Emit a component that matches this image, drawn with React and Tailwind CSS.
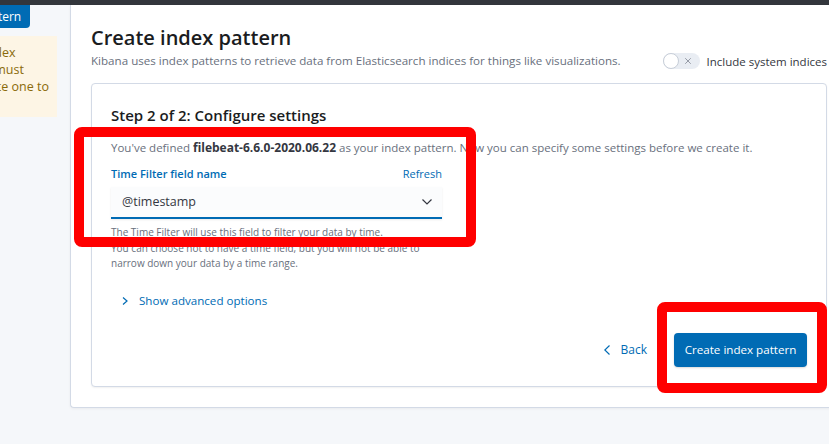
import { X } from 'lucide-react';

// Kibana "Create index pattern" step 2 screen with red annotation boxes.
function Chevron({ dir, className }) {
  if (dir === 'down') {
    return (
      <svg width="10" height="6" viewBox="0 0 10 6" className={className} fill="none">
        <polyline points="0.5,0.5 5,5 9.5,0.5" stroke="#343741" strokeWidth="1.2" />
      </svg>
    );
  }
  const pts = dir === 'left' ? '5.5,0.5 0.8,5 5.5,9.5' : '0.5,0.5 4.5,4 0.5,7.5';
  return (
    <svg width="6" height={dir === 'left' ? 10 : 8} viewBox={dir === 'left' ? '0 0 6 10' : '0 0 5 8'} className={className} fill="none">
      <polyline points={pts} stroke="#006bb4" strokeWidth="1.2" />
    </svg>
  );
}

function Sidebar() {
  return (
    <div className="w-[70px] shrink-0 overflow-hidden">
      <div className="ml-[-103px] flex h-[23px] w-[133px] items-center justify-center rounded-b-[4px] bg-[#006bb4] text-[12px] text-white">
        Create index pattern
      </div>
      <div className="mt-[8px] ml-[-96px] w-[153px] bg-[#fdf5e5] pt-[8px] pb-[5px] pl-[15px] text-[12.5px] leading-[17px] text-[#8a6a0a] whitespace-nowrap">
        No default index
        <br />
        pattern. You must
        <br />
        select or create one to
        <br />
        continue.
      </div>
    </div>
  );
}

function Toggle() {
  return (
    <div className="flex items-center">
      <div className="relative flex h-[16px] w-[37px] items-center rounded-full bg-[#e9edf3]">
        <div className="h-[16px] w-[16px] rounded-full border border-[#c7ced8] bg-white" />
        <X className="ml-[4px] h-[10px] w-[10px] text-[#69707d]" strokeWidth={1.6} />
      </div>
      <span className="ml-[7px] text-[11.5px] text-[#343741]">Include system indices</span>
    </div>
  );
}

function SettingsCard() {
  return (
    <div className="mt-[13px] rounded-[4px] border border-[#d3dae6] bg-white px-[19px] pt-[19px] pb-[19px] shadow-[0_1px_2px_rgba(0,0,0,0.06)]">
      <h2 className="text-[15px] font-semibold leading-[24px] text-[#1a1c21]">
        Step 2 of 2: Configure settings
      </h2>
      <p className="mt-[12px] text-[11.5px] leading-[18px] text-[#69707d]">
        You've defined <span className="text-[12px] font-bold text-[#343741]">filebeat-6.6.0-2020.06.22</span> as your
        index pattern. Now you can specify some settings before we create it.
      </p>
      <div className="mt-[9px] w-[331px]">
        <div className="flex items-center justify-between text-[11px] leading-[16px]">
          <span className="font-semibold text-[#006bb4]">Time Filter field name</span>
          <span className="text-[#006bb4]">Refresh</span>
        </div>
        <div className="mt-[5px] flex h-[32px] items-center justify-between border-b-2 border-[#006bb4] bg-[#fbfcfd] pl-[11px] pr-[10px] shadow-[0_1px_2px_rgba(0,0,0,0.08)]">
          <span className="text-[12.5px] text-[#343741]">@timestamp</span>
          <Chevron dir="down" />
        </div>
        <div className="mt-[6px] text-[10px] leading-[15.5px] text-[#69707d]">
          <p>The Time Filter will use this field to filter your data by time.</p>
          <p>You can choose not to have a time field, but you will not be able to</p>
          <p>narrow down your data by a time range.</p>
        </div>
      </div>
      <div className="mt-[20px] flex items-center pl-[11px] text-[11.6px] leading-[18px] text-[#006bb4]">
        <Chevron dir="right" />
        <span className="ml-[11px]">Show advanced options</span>
      </div>
      <div className="mt-[23px] flex items-center justify-end">
        <div className="flex items-center text-[12px] text-[#006bb4]">
          <Chevron dir="left" />
          <span className="ml-[11px]">Back</span>
        </div>
        <div className="ml-[27px] flex h-[34px] w-[133px] items-center justify-center rounded-[4px] bg-[#006bb4] text-[11.6px] text-white shadow-[0_1px_2px_rgba(0,0,0,0.15)]">
          Create index pattern
        </div>
      </div>
    </div>
  );
}

export default function App() {
  return (
    <div
      className="relative h-[444px] w-[829px] overflow-hidden bg-[#f5f7fa]"
      style={{ fontFamily: '"Open Sans", "Noto Sans", sans-serif' }}
    >
      <div className="h-[5px] bg-[#33363c]" />
      <div className="flex">
        <Sidebar />
        <div className="w-[800px] shrink-0 rounded-bl-[4px] border-b border-l border-[#d3dae6] bg-white pt-[21px] pl-[20px] pb-[20px] shadow-[0_1px_3px_rgba(0,0,0,0.05)]">
          <div className="w-[736px]">
            <div className="flex items-end justify-between">
              <div>
                <h1 className="text-[20px] font-semibold leading-[24px] text-[#1a1c21]">Create index pattern</h1>
                <p className="mt-[2px] text-[11.6px] leading-[18px] text-[#69707d]">
                  Kibana uses index patterns to retrieve data from Elasticsearch indices for things like visualizations.
                </p>
              </div>
              <Toggle />
            </div>
            <SettingsCard />
          </div>
        </div>
      </div>

      {/* red annotation boxes drawn over the screenshot */}
      <div className="absolute left-[74px] top-[127px] h-[120px] w-[402px] rounded-[8px] border-[10px] border-[#ff0000]" />
      <div className="absolute left-[657px] top-[302px] h-[91px] w-[170px] rounded-[8px] border-[10px] border-[#ff0000]" />
    </div>
  );
}
